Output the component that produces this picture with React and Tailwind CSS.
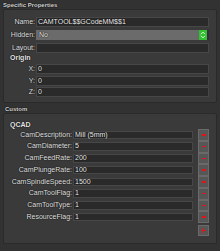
import React from "react";

const shadow = "[text-shadow:0_0_1px_#000,0_0_1px_#000]";

function TopRow({ label, children }) {
  return (
    <div className="flex h-[10px] items-center">
      <div className={`w-[32px] pr-[1px] text-right leading-[10px] ${shadow}`}>{label}</div>
      <div className="mr-[7px] flex h-full flex-1">{children}</div>
    </div>
  );
}

function Field({ value }) {
  return (
    <div className="h-full flex-1 border border-[#474747] bg-[#2a2a2a] pl-[1px] text-[#f2f2f2] leading-[8px]">
      <span className={shadow}>{value}</span>
    </div>
  );
}

function MinusBtn() {
  return (
    <div className="flex h-full w-[11px] items-center justify-center border border-[#6a6a6a] bg-[#575757]">
      <div className="h-[1.5px] w-[4px] bg-[#e0141c]" />
    </div>
  );
}

function CustomRow({ label, value }) {
  return (
    <div className="flex h-[11.75px] items-center">
      <div className={`w-[69px] pr-[1px] text-right ${shadow}`}>{label}</div>
      <div className="h-[8.5px] flex-1 border border-[#474747] bg-[#2a2a2a] pl-[1px] leading-[6.5px] text-[#f2f2f2]">
        <span className={shadow}>{value}</span>
      </div>
      <div className="ml-[5px] mr-[7px] h-full">
        <MinusBtn />
      </div>
    </div>
  );
}

export default function App() {
  const rows = [
    ["CamDescription:", "Mill (5mm)"],
    ["CamDiameter:", "5"],
    ["CamFeedRate:", "200"],
    ["CamPlungeRate:", "100"],
    ["CamSpindleSpeed:", "1500"],
    ["CamToolFlag:", "1"],
    ["CamToolType:", "1"],
    ["ResourceFlag:", "1"],
  ];
  return (
    <div className="h-[251px] w-[220px] overflow-hidden bg-[#323232] font-['Liberation_Sans',Arial,sans-serif] text-[7px] text-[#e8e8e8]">
      <div className={`h-[9px] pl-[3px] text-[6px] leading-[10px] font-bold text-[#d8d8d8] ${shadow}`}>
        Specific Properties
      </div>
      <div className="mx-[3px] flex h-[94px] flex-col rounded-[2px] border border-[#2a2a2a] bg-[#3a3a3a] pt-[7px]">
        <div className="flex flex-col gap-[3px]">
          <TopRow label="Name:">
            <Field value="CAMTOOL$$GCodeMM$$1" />
          </TopRow>
          <TopRow label="Hidden:">
            <div className="flex h-full flex-1 bg-[#6b6b6b]">
              <div className={`flex-1 pl-[3px] leading-[10px] text-[#f4f4f4] ${shadow}`}>No</div>
              <div className="flex w-[8px] items-center justify-center bg-[#30c030]">
                <svg width="6" height="8" viewBox="0 0 6 8">
                  <path d="M1 3.2 L3 1.2 L5 3.2 M1 4.8 L3 6.8 L5 4.8" fill="none" stroke="#e8ffe8" strokeWidth="1" />
                </svg>
              </div>
              <div className="w-[2px] bg-[#3c2a44]" />
            </div>
          </TopRow>
          <TopRow label="Layout:">
            <Field value="" />
          </TopRow>
        </div>
        <div className={`mt-[1px] h-[8px] pl-[6px] font-bold leading-[8px] ${shadow}`}>Origin</div>
        <div className="mt-[2px] flex flex-col gap-[1.5px]">
          <TopRow label="X:">
            <Field value="0" />
          </TopRow>
          <TopRow label="Y:">
            <Field value="0" />
          </TopRow>
          <TopRow label="Z:">
            <Field value="0" />
          </TopRow>
        </div>
      </div>
      <div className={`h-[10px] pl-[5px] pt-[2px] text-[6px] leading-[8px] font-bold text-[#d8d8d8] ${shadow}`}>
        Custom
      </div>
      <div className="mx-[3px] flex h-[131px] flex-col rounded-[2px] border border-[#2a2a2a] bg-[#3a3a3a] pt-[7px]">
        <div className={`h-[8px] pl-[6px] font-bold leading-[8px] ${shadow}`}>QCAD</div>
        <div className="flex flex-col">
          {rows.map(([l, v]) => (
            <CustomRow key={l} label={l} value={v} />
          ))}
        </div>
        <div className="mr-[7px] mt-[2px] flex h-[11px] justify-end">
          <div className="relative flex h-full w-[11px] items-center justify-center border border-[#6a6a6a] bg-[#575757]">
            <div className="absolute h-[1.5px] w-[5px] bg-[#e0141c]" />
            <div className="absolute h-[5px] w-[1.5px] bg-[#e0141c]" />
          </div>
        </div>
      </div>
    </div>
  );
}
